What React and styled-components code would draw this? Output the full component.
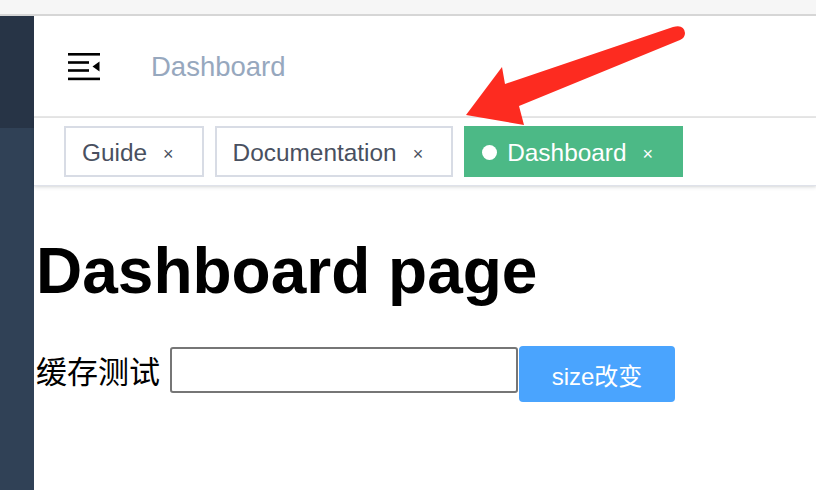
import React from "react";
import styled, { createGlobalStyle } from "styled-components";

const Global = createGlobalStyle`
  html, body { margin: 0; padding: 0; background: #fff; }
  body { font-family: "Liberation Sans", Arial, Helvetica, sans-serif; }
  #root { min-height: 100vh; }
`;

const Page = styled.div`
  position: relative;
  display: flex;
  flex-direction: column;
  min-height: 100vh;
`;

const TopStrip = styled.div`
  height: 14px;
  background: #f6f6f6;
  border-bottom: 2px solid #d6d6d6;
  flex: none;
`;

const Body = styled.div`
  flex: 1;
  display: flex;
`;

const Sidebar = styled.aside`
  width: 34px;
  flex: none;
  display: flex;
  flex-direction: column;
  background: #304156;
`;

const SidebarTop = styled.div`
  height: 112px;
  background: #273446;
`;

const Main = styled.main`
  flex: 1;
  display: flex;
  flex-direction: column;
  min-width: 0;
`;

const Navbar = styled.header`
  height: 100px;
  display: flex;
  align-items: center;
  border-bottom: 2px solid #e6e6e6;
`;

const Hamburger = styled.div`
  width: 32px;
  height: 28px;
  margin-left: 34px;
  margin-top: 2px;
  display: flex;
`;

const Crumb = styled.span`
  margin-left: 51px;
  font-size: 27.5px;
  color: #97a8be;
  margin-top: 2px;
`;

const TagsBar = styled.div`
  height: 68px;
  display: flex;
  align-items: flex-start;
  gap: 11px;
  padding: 8px 0 0 30px;
  box-sizing: border-box;
  box-shadow: 0 2px 4px rgba(0, 21, 41, 0.08), 0 1px 2px rgba(0, 0, 0, 0.08);
  border-bottom: 1px solid #dfe2ea;
`;

const Tag = styled.div`
  height: 51px;
  box-sizing: border-box;
  display: flex;
  align-items: center;
  padding: 2px 28px 0 16px;
  border: 2px solid ${(p) => (p.$active ? "#4cb986" : "#d8dce5")};
  background: ${(p) => (p.$active ? "#4cb986" : "#fff")};
  color: ${(p) => (p.$active ? "#fff" : "#495060")};
  font-size: 24.4px;
  white-space: nowrap;
`;

const Dot = styled.span`
  width: 15px;
  height: 15px;
  border-radius: 50%;
  background: #fff;
  margin-right: 10px;
  margin-top: -1px;
`;

const Close = styled.span`
  margin-left: 16px;
  font-size: 18px;
  margin-top: 3px;
`;

const Content = styled.section`
  padding: 0 0 0 2px;
`;

const Title = styled.h1`
  margin: 48px 0 0;
  font-size: 64px;
  font-weight: bold;
  color: #000;
  line-height: 74px;
`;

const Row = styled.div`
  display: flex;
  align-items: flex-start;
  margin-top: 38px;
`;

const Label = styled.span`
  font-family: "Noto Sans CJK SC", sans-serif;
  font-size: 31px;
  line-height: 40px;
  margin-top: 4px;
  color: #000;
  margin-right: 10px;
`;

const Input = styled.input`
  width: 348px;
  height: 46px;
  box-sizing: border-box;
  border: 2px solid #767676;
  border-radius: 3px;
  margin-top: 1px;
  padding: 0 6px;
  font-size: 24px;
  outline: none;
`;

const Button = styled.button`
  width: 156px;
  height: 56px;
  margin-left: 1px;
  border: none;
  border-radius: 4px;
  background: #4aa4fe;
  color: #fff;
  font-size: 24px;
  font-family: "Liberation Sans", "Noto Sans CJK SC", sans-serif;
  padding: 0;
`;

const Arrow = styled.svg`
  position: absolute;
  left: 0;
  top: 0;
  width: 816px;
  height: 490px;
  pointer-events: none;
`;

function MenuIcon() {
  return (
    <svg width="32" height="28" viewBox="0 0 32 28">
      <rect x="0" y="0" width="32" height="2.6" fill="#000" />
      <rect x="0" y="8.2" width="21" height="2.6" fill="#000" />
      <rect x="0" y="16.2" width="21" height="2.6" fill="#000" />
      <rect x="0" y="24.6" width="32" height="2.6" fill="#000" />
      <polygon points="31.5,8.4 31.5,18.6 24.5,13.5" fill="#000" />
    </svg>
  );
}

export default function App() {
  return (
    <>
      <Global />
      <Page>
        <TopStrip />
        <Body>
          <Sidebar>
            <SidebarTop />
          </Sidebar>
          <Main>
            <Navbar>
              <Hamburger>
                <MenuIcon />
              </Hamburger>
              <Crumb>Dashboard</Crumb>
            </Navbar>
            <TagsBar>
              <Tag>
                Guide<Close>×</Close>
              </Tag>
              <Tag>
                Documentation<Close>×</Close>
              </Tag>
              <Tag $active>
                <Dot />
                Dashboard<Close>×</Close>
              </Tag>
            </TagsBar>
            <Content>
              <Title>Dashboard page</Title>
              <Row>
                <Label>缓存测试</Label>
                <Input type="text" />
                <Button>size改变</Button>
              </Row>
            </Content>
          </Main>
        </Body>
        <Arrow viewBox="0 0 816 490">
          <path
            d="M466,115 L502,67 L505,84 L673,27 Q684,24 685,33 Q685,38 680,40 L519,106 L524,125 Z"
            fill="#fd2b20"
          />
        </Arrow>
      </Page>
    </>
  );
}
